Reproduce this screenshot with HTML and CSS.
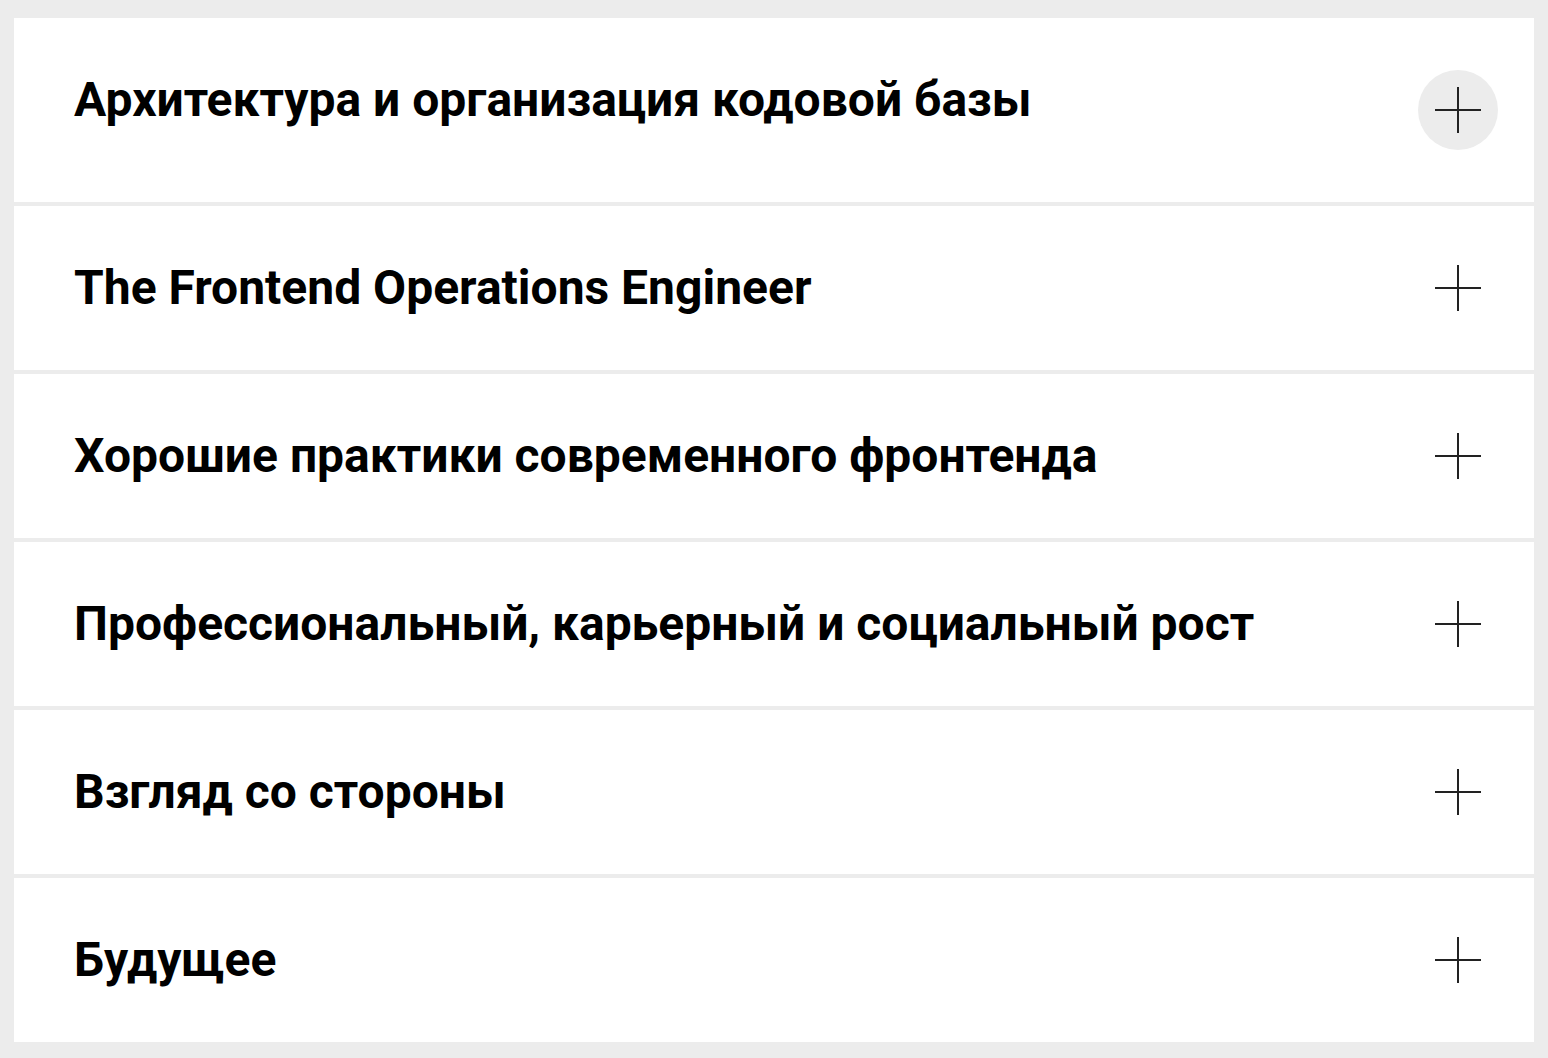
FILE: index.html
```html
<!DOCTYPE html>
<html lang="ru">
<head>
<meta charset="utf-8">
<title>Темы</title>
<link rel="stylesheet" href="styles.css">
</head>
<body>
<div class="list">
  <div class="card card--hover">
    <h3 class="card__title">Архитектура и организация кодовой базы</h3>
    <button class="card__toggle" aria-label="Развернуть"><span class="plus"></span></button>
  </div>
  <div class="card">
    <h3 class="card__title">The Frontend Operations Engineer</h3>
    <button class="card__toggle" aria-label="Развернуть"><span class="plus"></span></button>
  </div>
  <div class="card">
    <h3 class="card__title">Хорошие практики современного фронтенда</h3>
    <button class="card__toggle" aria-label="Развернуть"><span class="plus"></span></button>
  </div>
  <div class="card">
    <h3 class="card__title">Профессиональный, карьерный и социальный рост</h3>
    <button class="card__toggle" aria-label="Развернуть"><span class="plus"></span></button>
  </div>
  <div class="card">
    <h3 class="card__title">Взгляд со стороны</h3>
    <button class="card__toggle" aria-label="Развернуть"><span class="plus"></span></button>
  </div>
  <div class="card">
    <h3 class="card__title">Будущее</h3>
    <button class="card__toggle" aria-label="Развернуть"><span class="plus"></span></button>
  </div>
</div>
</body>
</html>
```
FILE: styles.css
```css
html, body {
  margin: 0;
  padding: 0;
  background: #ececec;
}
body {
  font-family: Roboto, "Noto Sans", "Liberation Sans", sans-serif;
  color: #000;
}
.list {
  display: flex;
  flex-direction: column;
  gap: 4px;
  padding: 18px 14px 16px 14px;
}
.card {
  background: #fff;
  display: flex;
  align-items: flex-start;
  justify-content: space-between;
  padding: 42px 36px 42px 60px;
}
.card__title {
  margin: 0;
  font-size: 48px;
  font-weight: 700;
  line-height: 80px;
  white-space: nowrap;
}
.card__toggle {
  flex: none;
  width: 80px;
  height: 80px;
  border: 0;
  padding: 0;
  border-radius: 50%;
  background: transparent;
  display: flex;
  align-items: center;
  justify-content: center;
  cursor: pointer;
}
.card--hover .card__toggle {
  background: #ececec;
  margin: 10px 0;
}
.plus {
  position: relative;
  width: 46px;
  height: 46px;
  display: block;
}
.plus::before,
.plus::after {
  content: "";
  position: absolute;
  background: #222;
}
.plus::before {
  left: 0;
  right: 0;
  top: 22px;
  height: 2px;
}
.plus::after {
  top: 0;
  bottom: 0;
  left: 22px;
  width: 2px;
}
```
